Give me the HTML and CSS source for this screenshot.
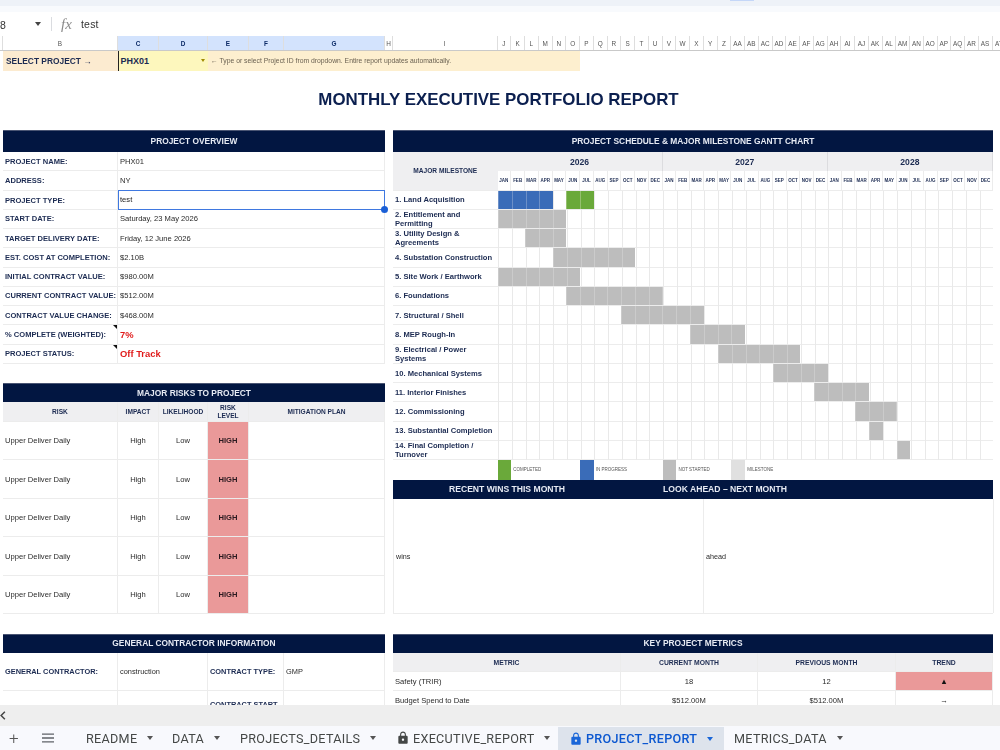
FILE: index.html
```html
<!DOCTYPE html>
<html lang="en">
<head>
<meta charset="utf-8">
<title>Monthly Executive Portfolio Report</title>
<link rel="stylesheet" href="styles.css">
</head>
<body>
<div class="top-strip"><span class="top-mark"></span></div>
<div class="formula-bar">
  <span class="name-box">8</span><span class="caret name-caret"></span><span class="fb-sep"></span><span class="fx">fx</span><span class="fb-value">test</span>
</div>
<div class="col-heads">
  <span class="ch w-a"></span><span class="ch w-b">B</span><span class="ch w-c on">C</span><span class="ch w-d on">D</span><span class="ch w-e on">E</span><span class="ch w-f on">F</span><span class="ch w-g on">G</span><span class="ch w-h">H</span><span class="ch w-i">I</span>
  <span class="ch n">J</span><span class="ch n">K</span><span class="ch n">L</span><span class="ch n">M</span><span class="ch n">N</span><span class="ch n">O</span><span class="ch n">P</span><span class="ch n">Q</span><span class="ch n">R</span><span class="ch n">S</span><span class="ch n">T</span><span class="ch n">U</span><span class="ch n">V</span><span class="ch n">W</span><span class="ch n">X</span><span class="ch n">Y</span><span class="ch n">Z</span><span class="ch n">AA</span><span class="ch n">AB</span><span class="ch n">AC</span><span class="ch n">AD</span><span class="ch n">AE</span><span class="ch n">AF</span><span class="ch n">AG</span><span class="ch n">AH</span><span class="ch n">AI</span><span class="ch n">AJ</span><span class="ch n">AK</span><span class="ch n">AL</span><span class="ch n">AM</span><span class="ch n">AN</span><span class="ch n">AO</span><span class="ch n">AP</span><span class="ch n">AQ</span><span class="ch n">AR</span><span class="ch n">AS</span><span class="ch n">AT</span>
</div>
<main class="sheet">
  <div class="select-row">
    <span class="sel-label">SELECT PROJECT →</span>
    <span class="sel-input">PHX01<span class="caret sel-caret"></span></span>
    <span class="sel-hint">← Type or select Project ID from dropdown. Entire report updates automatically.</span>
  </div>
  <h1 class="title">MONTHLY EXECUTIVE PORTFOLIO REPORT</h1>
  <div class="board">
    <div class="stack">
      <section class="overview">
        <h2 class="band band-tall">PROJECT OVERVIEW</h2>
        <div class="kv"><span class="k">PROJECT NAME:</span><span class="v">PHX01</span></div>
        <div class="kv"><span class="k">ADDRESS:</span><span class="v">NY</span></div>
        <div class="kv"><span class="k">PROJECT TYPE:</span><span class="v selected">test<i class="handle"></i></span></div>
        <div class="kv"><span class="k">START DATE:</span><span class="v">Saturday, 23 May 2026</span></div>
        <div class="kv"><span class="k">TARGET DELIVERY DATE:</span><span class="v">Friday, 12 June 2026</span></div>
        <div class="kv"><span class="k">EST. COST AT COMPLETION:</span><span class="v">$2.10B</span></div>
        <div class="kv"><span class="k">INITIAL CONTRACT VALUE:</span><span class="v">$980.00M</span></div>
        <div class="kv"><span class="k">CURRENT CONTRACT VALUE:</span><span class="v">$512.00M</span></div>
        <div class="kv"><span class="k">CONTRACT VALUE CHANGE:</span><span class="v">$468.00M</span></div>
        <div class="kv"><span class="k noted">% COMPLETE (WEIGHTED):</span><span class="v alert">7%</span></div>
        <div class="kv"><span class="k noted">PROJECT STATUS:</span><span class="v alert">Off Track</span></div>
      </section>
      <section class="risks">
        <h2 class="band">MAJOR RISKS TO PROJECT</h2>
        <div class="risk-row risk-head"><span>RISK</span><span>IMPACT</span><span>LIKELIHOOD</span><span class="r-level">RISK LEVEL</span><span>MITIGATION PLAN</span></div>
        <div class="risk-row"><span class="r-name">Upper Deliver Daily</span><span>High</span><span>Low</span><span class="r-high">HIGH</span><span></span></div>
        <div class="risk-row"><span class="r-name">Upper Deliver Daily</span><span>High</span><span>Low</span><span class="r-high">HIGH</span><span></span></div>
        <div class="risk-row"><span class="r-name">Upper Deliver Daily</span><span>High</span><span>Low</span><span class="r-high">HIGH</span><span></span></div>
        <div class="risk-row"><span class="r-name">Upper Deliver Daily</span><span>High</span><span>Low</span><span class="r-high">HIGH</span><span></span></div>
        <div class="risk-row"><span class="r-name">Upper Deliver Daily</span><span>High</span><span>Low</span><span class="r-high">HIGH</span><span></span></div>
      </section>
      <section class="contractor">
        <h2 class="band">GENERAL CONTRACTOR INFORMATION</h2>
        <div class="gc-row"><span class="k">GENERAL CONTRACTOR:</span><span class="v">construction</span><span class="k">CONTRACT TYPE:</span><span class="v">GMP</span></div>
        <div class="gc-row"><span class="k"></span><span class="v"></span><span class="k">CONTRACT START DATE:</span><span class="v"></span></div>
      </section>
    </div>
    <div class="stack">
      <section class="schedule">
        <h2 class="band band-tall">PROJECT SCHEDULE &amp; MAJOR MILESTONE GANTT CHART</h2>
        <div class="g-head">
          <div class="g-head-label">MAJOR MILESTONE</div>
          <div class="g-cal">
            <div class="years"><span>2026</span><span>2027</span><span>2028</span></div>
            <div class="months">
              <span>JAN</span><span>FEB</span><span>MAR</span><span>APR</span><span>MAY</span><span>JUN</span><span>JUL</span><span>AUG</span><span>SEP</span><span>OCT</span><span>NOV</span><span>DEC</span>
              <span>JAN</span><span>FEB</span><span>MAR</span><span>APR</span><span>MAY</span><span>JUN</span><span>JUL</span><span>AUG</span><span>SEP</span><span>OCT</span><span>NOV</span><span>DEC</span>
              <span>JAN</span><span>FEB</span><span>MAR</span><span>APR</span><span>MAY</span><span>JUN</span><span>JUL</span><span>AUG</span><span>SEP</span><span>OCT</span><span>NOV</span><span>DEC</span>
            </div>
          </div>
        </div>
        <div class="g-row"><span class="g-label">1. Land Acquisition</span><div class="track"><i class="bar blue" style="grid-column:1 / span 4"></i><i class="bar green" style="grid-column:6 / span 2"></i></div></div>
        <div class="g-row"><span class="g-label">2. Entitlement and Permitting</span><div class="track"><i class="bar" style="grid-column:1 / span 5"></i></div></div>
        <div class="g-row"><span class="g-label">3. Utility Design &amp; Agreements</span><div class="track"><i class="bar" style="grid-column:3 / span 3"></i></div></div>
        <div class="g-row"><span class="g-label">4. Substation Construction</span><div class="track"><i class="bar" style="grid-column:5 / span 6"></i></div></div>
        <div class="g-row"><span class="g-label">5. Site Work / Earthwork</span><div class="track"><i class="bar" style="grid-column:1 / span 6"></i></div></div>
        <div class="g-row"><span class="g-label">6. Foundations</span><div class="track"><i class="bar" style="grid-column:6 / span 7"></i></div></div>
        <div class="g-row"><span class="g-label">7. Structural / Shell</span><div class="track"><i class="bar" style="grid-column:10 / span 6"></i></div></div>
        <div class="g-row"><span class="g-label">8. MEP Rough-In</span><div class="track"><i class="bar" style="grid-column:15 / span 4"></i></div></div>
        <div class="g-row"><span class="g-label">9. Electrical / Power Systems</span><div class="track"><i class="bar" style="grid-column:17 / span 6"></i></div></div>
        <div class="g-row"><span class="g-label">10. Mechanical Systems</span><div class="track"><i class="bar" style="grid-column:21 / span 4"></i></div></div>
        <div class="g-row"><span class="g-label">11. Interior Finishes</span><div class="track"><i class="bar" style="grid-column:24 / span 4"></i></div></div>
        <div class="g-row"><span class="g-label">12. Commissioning</span><div class="track"><i class="bar" style="grid-column:27 / span 3"></i></div></div>
        <div class="g-row"><span class="g-label">13. Substantial Completion</span><div class="track"><i class="bar" style="grid-column:28 / span 1"></i></div></div>
        <div class="g-row"><span class="g-label">14. Final Completion / Turnover</span><div class="track"><i class="bar" style="grid-column:30 / span 1"></i></div></div>
        <div class="legend">
          <div class="legend-track">
            <i class="swatch green"></i><span class="lg-text lg-a">COMPLETED</span>
            <i class="swatch blue"></i><span class="lg-text lg-b">IN PROGRESS</span>
            <i class="swatch grey"></i><span class="lg-text lg-c">NOT STARTED</span>
            <i class="swatch pale"></i><span class="lg-text lg-d">MILESTONE</span>
          </div>
        </div>
        <h2 class="band wins-band"><span>RECENT WINS THIS MONTH</span><span>LOOK AHEAD – NEXT MONTH</span></h2>
        <div class="wins"><span>wins</span><span>ahead</span></div>
      </section>
      <section class="metrics">
        <h2 class="band">KEY PROJECT METRICS</h2>
        <div class="m-row m-head"><span>METRIC</span><span>CURRENT MONTH</span><span>PREVIOUS MONTH</span><span>TREND</span></div>
        <div class="m-row"><span class="m-name">Safety (TRIR)</span><span>18</span><span>12</span><span class="m-bad">▲</span></div>
        <div class="m-row"><span class="m-name">Budget Spend to Date</span><span>$512.00M</span><span>$512.00M</span><span>→</span></div>
      </section>
    </div>
  </div>
</main>
<div class="scroll-bar"><svg class="chev" viewBox="0 0 8 12" aria-hidden="true"><path d="M6.5 1 1.5 6l5 5" fill="none" stroke="#444" stroke-width="2"/></svg></div>
<nav class="tabs">
  <span class="tab-tool plus">+</span>
  <svg class="menu" viewBox="0 0 14 10" aria-hidden="true"><path d="M1 1.2h12M1 5h12M1 8.8h12" stroke="#5f6368" stroke-width="1.3"/></svg>
  <span class="tab t-readme">README<i class="caret"></i></span>
  <span class="tab t-data">DATA<i class="caret"></i></span>
  <span class="tab t-proj">PROJECTS_DETAILS<i class="caret"></i></span>
  <span class="tab t-exec"><svg class="lock" viewBox="0 0 24 24" aria-hidden="true"><path d="M18 8h-1V6c0-2.76-2.24-5-5-5S7 3.24 7 6v2H6c-1.1 0-2 .9-2 2v10c0 1.1.9 2 2 2h12c1.1 0 2-.9 2-2V10c0-1.1-.9-2-2-2zm-6 9c-1.1 0-2-.9-2-2s.9-2 2-2 2 .9 2 2-.9 2-2 2zm3.1-9H8.9V6c0-1.71 1.39-3.1 3.1-3.1 1.71 0 3.1 1.39 3.1 3.1v2z"/></svg>EXECUTIVE_REPORT<i class="caret"></i></span>
  <span class="tab t-active"><svg class="lock" viewBox="0 0 24 24" aria-hidden="true"><path d="M18 8h-1V6c0-2.76-2.24-5-5-5S7 3.24 7 6v2H6c-1.1 0-2 .9-2 2v10c0 1.1.9 2 2 2h12c1.1 0 2-.9 2-2V10c0-1.1-.9-2-2-2zm-6 9c-1.1 0-2-.9-2-2s.9-2 2-2 2 .9 2 2-.9 2-2 2zm3.1-9H8.9V6c0-1.71 1.39-3.1 3.1-3.1 1.71 0 3.1 1.39 3.1 3.1v2z"/></svg>PROJECT_REPORT<i class="caret"></i></span>
  <span class="tab t-metrics">METRICS_DATA<i class="caret"></i></span>
</nav>
</body>
</html>
```
FILE: styles.css
```css
:root {
  --row: 19.27px;
  --navy: #021641;
  --ink: #1c2b52;
  --line: #ececec;
  --head: #efeff1;
  --red: #ea9999;
  --cell: 13.764px;
}
* { box-sizing: border-box; }
html, body { margin: 0; height: 100%; }
body {
  width: 1000px;
  height: 750px;
  overflow: hidden;
  display: flex;
  flex-direction: column;
  background: #fff;
  font-family: "Liberation Sans", Arial, sans-serif;
  color: #222;
  filter: blur(.3px);
}
h1, h2 { margin: 0; }
i { font-style: normal; display: block; }

.top-strip { height: 12px; flex: none; background: linear-gradient(#eef2f8 0 6px, #f8fafd 6px); position: relative; }
.top-mark { position: absolute; left: 730px; top: 0; width: 24px; height: 1px; background: #c5d7f8; }

.formula-bar { height: 24px; flex: none; display: flex; align-items: center; font-size: 10.5px; color: #333; }
.name-box { width: 35px; padding-top: 1px; }
.caret { display: inline-block; width: 0; height: 0; border-left: 3.5px solid transparent; border-right: 3.5px solid transparent; border-top: 4px solid #444; }
.name-caret { margin-right: 10px; }
.fb-sep { width: 1px; height: 14px; background: #dadce0; margin-right: 9px; }
.fx { font-family: "Liberation Serif", serif; font-style: italic; font-size: 15px; color: #8a8a8a; width: 20px; }
.fb-value { letter-spacing: .2px; }

.col-heads { height: 15px; flex: none; display: flex; overflow: hidden; border-bottom: 1px solid #c9c9c9; }
.ch { flex: none; display: flex; align-items: center; justify-content: center; font-size: 6.4px; color: #555; border-right: 1px solid #dedede; white-space: nowrap; }
.ch.on { background: #d3e3fd; color: #0b2a66; font-weight: bold; }
.w-a { width: 3px; }
.w-b { width: 115px; }
.w-c { width: 41px; }
.w-d { width: 49px; }
.w-e { width: 41px; }
.w-f { width: 35px; }
.w-g { width: 101px; }
.w-h { width: 8px; }
.w-i { width: 104.5px; }
.n { width: var(--cell); }

.sheet { flex: none; height: 654px; overflow: hidden; }
.select-row { height: 20px; margin-left: 3px; width: 577px; display: flex; font-size: 8px; background: #fdefcf; }
.sel-label { width: 115px; background: #fcebd0; color: var(--ink); font-weight: bold; font-size: 8.4px; line-height: 20px; padding-left: 3px; white-space: nowrap; }
.sel-input { width: 90px; background: #fdf7bd; border-left: 1.5px solid #222; color: var(--ink); font-weight: bold; font-size: 9px; line-height: 20px; padding-left: 1.5px; position: relative; }
.sel-caret { position: absolute; right: 3px; top: 8px; border-top-color: #a08a00; border-left-width: 2.5px; border-right-width: 2.5px; border-top-width: 3px; }
.sel-hint { padding-left: 3px; line-height: 20px; font-size: 6.8px; color: #6b6252; white-space: nowrap; }

.title { height: 59px; display: flex; align-items: center; justify-content: center; font-size: 16.9px; color: #0b1f4f; padding: 0 3px 2px 0; }

.board { display: flex; gap: 8px; margin-left: 3px; align-items: flex-start; }
.stack { display: flex; flex-direction: column; gap: var(--row); }
.stack:first-child { width: 382px; }
.stack:last-child { width: 600px; }

.band { height: var(--row); background: var(--navy); color: #e6eaf3; font-size: 8.4px; font-weight: bold; display: flex; align-items: center; justify-content: center; white-space: nowrap; border-top: 1px solid #4a5573; padding-bottom: 1px; }
.band-tall { height: 22px; padding-bottom: 2px; }

.kv { height: var(--row); display: grid; grid-template-columns: 115px 267px; border-bottom: 1px solid var(--line); }
.k { font-size: 7.55px; font-weight: bold; color: var(--ink); display: flex; align-items: center; padding-left: 2px; border-right: 1px solid var(--line); white-space: nowrap; position: relative; }
.v { font-size: 7.6px; color: #2a2a2a; display: flex; align-items: center; padding-left: 2px; border-right: 1px solid var(--line); position: relative; white-space: nowrap; }
.alert { color: #e01b1b; font-weight: bold; font-size: 9.4px; }
.noted::after { content: ""; position: absolute; right: 0; top: 0; border-top: 4px solid #111; border-left: 4px solid transparent; }
.selected { border: 1.5px solid #3f78e0; padding-left: 1px; color: #222; margin-top: -1px; height: calc(var(--row) + 1px); }
.handle { position: absolute; right: -4px; bottom: -4px; width: 7px; height: 7px; border-radius: 50%; background: #1a5fd6; border: 0; z-index: 2; }

.risk-row { height: calc(var(--row) * 2); display: grid; grid-template-columns: 115px 41px 49px 41px 136px; border-bottom: 1px solid var(--line); }
.risk-row > span { display: flex; align-items: center; justify-content: center; text-align: center; font-size: 7.6px; color: #2a2a2a; border-right: 1px solid var(--line); }
.risk-head { height: var(--row); background: var(--head); }
.risk-head > span { font-size: 6.6px; font-weight: bold; color: var(--ink); line-height: 8px; white-space: normal; }
.risk-row > .r-level { padding: 0 9px; }
.risk-row > .r-name { justify-content: flex-start; padding-left: 2px; }
.risk-row > .r-high { background: var(--red); color: #2a1a20; font-weight: bold; }

.gc-row { height: calc(var(--row) * 2); display: grid; grid-template-columns: 115px 90px 76px 101px; border-bottom: 1px solid var(--line); }
.gc-row .k { white-space: normal; line-height: 10px; font-size: 7.4px; }
.gc-row .v { font-size: 7.4px; }

.g-head { height: calc(var(--row) * 2); display: flex; border-bottom: 1px solid var(--line); }
.g-head-label { width: 104.5px; flex: none; background: var(--head); display: flex; align-items: center; justify-content: center; font-size: 6.6px; font-weight: bold; color: var(--ink); }
.g-cal { flex: 1; display: flex; flex-direction: column; }
.years { height: var(--row); display: grid; grid-template-columns: repeat(3, 1fr); background: var(--head); }
.years span { display: flex; align-items: center; justify-content: center; font-size: 8.6px; font-weight: bold; color: var(--ink); border-right: 1px solid #dcdcdf; }
.months { flex: 1; display: grid; grid-template-columns: repeat(36, 1fr); }
.months span { display: flex; align-items: center; justify-content: center; font-size: 4.5px; font-weight: bold; color: var(--ink); border-right: 1px solid var(--line); white-space: nowrap; overflow: hidden; }

.g-row { height: var(--row); display: flex; border-bottom: 1px solid var(--line); }
.g-label { width: 104.5px; flex: none; display: flex; align-items: center; padding: 0 2px 0 2px; font-size: 7.6px; line-height: 9px; font-weight: bold; color: var(--ink); }
.track { flex: 1; display: grid; grid-template-columns: repeat(36, 1fr); background-image: repeating-linear-gradient(to right, #e9e9e9 0 1px, transparent 1px var(--cell)); margin-bottom: -1px; }
.bar { height: calc(var(--row) - 1px); grid-row: 1; background-color: #bdbdbd; background-image: repeating-linear-gradient(to right, #cbcbcb 0 1px, transparent 1px var(--cell)); }
.bar.blue { background-color: #3a6cb8; background-image: repeating-linear-gradient(to right, #6c90c8 0 1px, transparent 1px var(--cell)); }
.bar.green { background-color: #6aa93a; background-image: repeating-linear-gradient(to right, #96c06f 0 1px, transparent 1px var(--cell)); }

.legend { height: var(--row); padding-left: 104.5px; }
.legend-track { height: 100%; display: grid; grid-template-columns: repeat(36, 1fr); }
.swatch { grid-row: 1; }
.swatch.green { background: #6aa93a; grid-column: 1; }
.swatch.blue { background: #3a6cb8; grid-column: 7; }
.swatch.grey { background: #bdbdbd; grid-column: 13; }
.swatch.pale { background: #e0e0e0; grid-column: 18; }
.lg-text { grid-row: 1; display: flex; align-items: center; font-size: 4.5px; color: #555; padding-left: 2px; white-space: nowrap; }
.lg-a { grid-column: 2 / span 5; }
.lg-b { grid-column: 8 / span 5; }
.lg-c { grid-column: 14 / span 4; }
.lg-d { grid-column: 19 / span 5; }

.wins-band { display: grid; grid-template-columns: 228px 208px 1fr; justify-content: stretch; border-top: 0; }
.wins-band span { text-align: center; font-size: 8.6px; }
.wins { height: calc(var(--row) * 6); display: grid; grid-template-columns: 310px 290px; border-bottom: 1px solid var(--line); border-left: 1px solid var(--line); }
.wins span { display: flex; align-items: center; font-size: 7.2px; color: #2a2a2a; padding-left: 2px; border-right: 1px solid var(--line); }

.m-row { height: var(--row); display: grid; grid-template-columns: 228px 137px 138px 97px; border-bottom: 1px solid var(--line); }
.m-row > span { display: flex; align-items: center; justify-content: center; font-size: 7.6px; color: #2a2a2a; border-right: 1px solid var(--line); }
.m-head { background: var(--head); }
.m-head > span { font-size: 6.8px; font-weight: bold; color: var(--ink); }
.m-row > .m-name { justify-content: flex-start; padding-left: 2px; }
.m-row > .m-bad { background: var(--red); color: #111; }

.scroll-bar { height: 21px; flex: none; background: #eeeeee; display: flex; align-items: center; }
.chev { width: 6px; height: 9px; margin-left: 0; }

.tabs { height: 24px; flex: none; background: #f8f9fd; position: relative; font-family: Roboto, "Liberation Sans", sans-serif; font-size: 12.6px; letter-spacing: .3px; color: #444746; }
.tab-tool, .menu, .tab { position: absolute; top: 0; height: 100%; display: flex; align-items: center; white-space: nowrap; }
.plus { left: 9px; font-size: 17px; color: #555; font-weight: 300; letter-spacing: 0; }
.menu { left: 41px; top: 7px; width: 14px; height: 10px; }
.tab .caret { margin-left: 10px; border-top-color: #555; }
.lock { width: 14px; height: 16px; fill: #444746; margin-right: 3px; flex: none; }
.t-readme { left: 86px; }
.t-data { left: 172px; }
.t-proj { left: 240px; }
.t-exec { left: 396px; }
.t-active { left: 558px; top: 1px; height: 23px; width: 166px; padding-left: 11px; background: #dde3ec; color: #0b57d0; font-weight: 500; }
.t-active .lock { fill: #1a66d8; }
.t-active .caret { border-top-color: #1a66d8; }
.t-metrics { left: 734px; }
```
